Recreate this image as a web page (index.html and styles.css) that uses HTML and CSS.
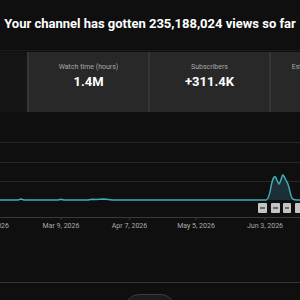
FILE: index.html
```html
<!DOCTYPE html>
<html>

<head>
    <title>Channel analytics</title>
    <link rel="stylesheet" href="styles.css">
</head>

<body>
    <!--Overskrift-->
    <h1 class="headline">Your channel has gotten 235,188,024 views so far</h1>

    <section class="panel">
        <!--Faner med tall-->
        <div class="tabs">
            <div class="tab tab-active">
                <div class="tab-label">Views</div>
                <div class="tab-value">235.2M</div>
            </div>
            <div class="tab">
                <div class="tab-label">Watch time (hours)</div>
                <div class="tab-value">1.4M</div>
            </div>
            <div class="tab">
                <div class="tab-label">Subscribers</div>
                <div class="tab-value">+311.4K</div>
            </div>
            <div class="tab">
                <div class="tab-label">Estimated revenue (USD)</div>
                <div class="tab-value">$18.2K</div>
            </div>
        </div>

        <!--Graf-->
        <div class="chart">
            <svg class="chart-svg" width="300" height="120" viewBox="0 0 300 120">
                <line x1="0" y1="30.5" x2="300" y2="30.5" stroke="#262626" />
                <line x1="0" y1="50.5" x2="300" y2="50.5" stroke="#262626" />
                <line x1="0" y1="69.5" x2="300" y2="69.5" stroke="#262626" />
                <line x1="0" y1="105.5" x2="300" y2="105.5" stroke="#3a3a3a" />
                <line x1="61" y1="105" x2="61" y2="108" stroke="#3a3a3a" />
                <line x1="129.5" y1="105" x2="129.5" y2="108" stroke="#3a3a3a" />
                <line x1="196" y1="105" x2="196" y2="108" stroke="#3a3a3a" />
                <line x1="265" y1="105" x2="265" y2="108" stroke="#3a3a3a" />

                <path d="M266 88 C268 88 269 83 270 80 C271 74 272 68 274 65 C276 63 277 70 279 72 C281 70 282 62 283 63 C285 65 286 69 287 70 C289 73 290 82 292 86 C293 88 295 88 297 88 Z" fill="#1b3036" />
                <path d="M0 88 L18 88 L21 87 L24 88 L58 88 L61 87.2 L64 88 L88 88 L92 87.3 L96 87.5 L104 87 L112 88 L266 88 C268 88 269 83 270 80 C271 74 272 68 274 65 C276 63 277 70 279 72 C281 70 282 62 283 63 C285 65 286 69 287 70 C289 73 290 82 292 86 C293 88 295 88 300 88" fill="none" stroke="#43adbd" stroke-width="1.4" />

                <!--video markers-->
                <rect x="258" y="91" width="9" height="10" rx="1" fill="#c4c4c4" />
                <rect x="260" y="95" width="5" height="2" fill="#6a6a6a" />
                <rect x="271" y="91" width="9" height="10" rx="1" fill="#c4c4c4" />
                <rect x="273" y="95" width="5" height="2" fill="#6a6a6a" />
                <rect x="283" y="91" width="8" height="10" rx="1" fill="#c4c4c4" />
                <rect x="285" y="95" width="4" height="2" fill="#6a6a6a" />
                <rect x="295" y="91" width="9" height="10" rx="1" fill="#c4c4c4" />

                <text class="axis-label" x="-9" y="116">Feb 8, 2026</text>
                <text class="axis-label" x="61" y="116">Mar 9, 2026</text>
                <text class="axis-label" x="129.5" y="116">Apr 7, 2026</text>
                <text class="axis-label" x="196" y="116">May 5, 2026</text>
                <text class="axis-label" x="265" y="116">Jun 3, 2026</text>
            </svg>
        </div>

        <div class="chart-footer">
            <button class="more-button">See more</button>
        </div>
    </section>
</body>

</html>
```

FILE: styles.css
```css
  body {
      margin: 0;
      width: 300px;
      height: 300px;
      overflow: hidden;
      background-color: #0f0f0f;
      font-family: Roboto, "Liberation Sans", sans-serif;
  }

  /* Style the headline */
  .headline {
      margin: 0;
      padding-top: 15px;
      font-size: 13px;
      line-height: 17px;
      font-weight: bold;
      color: #fff;
      text-align: center;
      white-space: nowrap;
  }

  /* Style the panel */
  .panel {
      margin-top: 18px;
      border-top: 1px solid #1c1c1c;
      padding-top: 1px;
  }

  /* Style the tabs */
  .tabs {
      display: flex;
      margin-left: -92px;
      height: 60px;
  }

  .tab {
      flex: 0 0 121px;
      background-color: #282828;
      border-right: 2px solid #363636;
      text-align: center;
      padding-top: 11px;
      box-sizing: border-box;
  }

  .tab-active {
      background-color: #151515;
  }

  .tab-label {
      font-size: 7px;
      line-height: 9px;
      color: #aaa;
      white-space: nowrap;
  }

  .tab-value {
      margin-top: 2px;
      font-size: 13px;
      line-height: 16px;
      font-weight: bold;
      color: #fff;
  }

  /* Style the chart */
  .chart {
      height: 120px;
  }

  .chart-svg {
      display: block;
  }

  .axis-label {
      font-size: 7px;
      fill: #aaa;
      text-anchor: middle;
  }

  .chart-footer {
      margin-top: 50px;
      border-top: 1px solid #333;
      display: flex;
      justify-content: center;
  }

  .more-button {
      margin-top: 11px;
      width: 50px;
      height: 28px;
      background-color: #1c1c1c;
      border: 1px solid #3c3c3c;
      border-radius: 14px;
      color: #aaa;
      font-size: 8px;
      font-family: Roboto, sans-serif;
  }
```
